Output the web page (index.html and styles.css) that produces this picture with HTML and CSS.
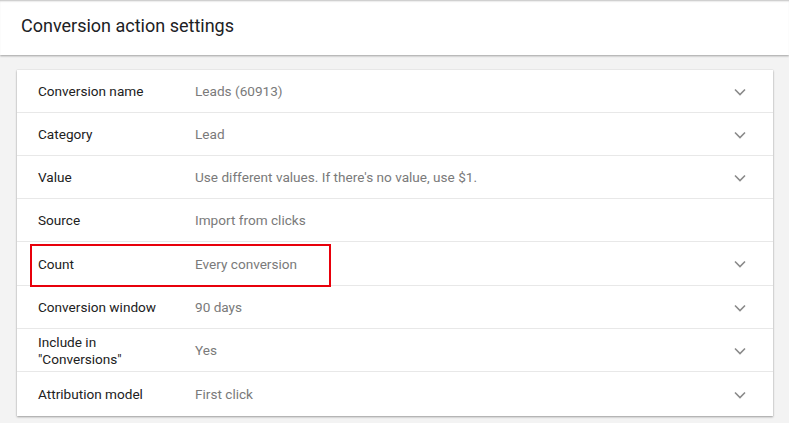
FILE: index.html
```html
<!DOCTYPE html>
<html>
<head>
<meta charset="utf-8">
<link rel="stylesheet" href="styles.css">
</head>
<body>
<header class="header"><h1 class="title">Conversion action settings</h1></header>
<main class="content">
  <section class="card">
    <div class="row"><div class="label">Conversion name</div><div class="value">Leads (60913)</div><svg class="chev" viewBox="0 0 12 8"><path d="M1 1.5l5 5 5-5" /></svg></div>
    <div class="row"><div class="label">Category</div><div class="value">Lead</div><svg class="chev" viewBox="0 0 12 8"><path d="M1 1.5l5 5 5-5" /></svg></div>
    <div class="row"><div class="label">Value</div><div class="value">Use different values. If there's no value, use $1.</div><svg class="chev" viewBox="0 0 12 8"><path d="M1 1.5l5 5 5-5" /></svg></div>
    <div class="row"><div class="label">Source</div><div class="value">Import from clicks</div></div>
    <div class="row tall"><div class="label">Count</div><div class="value">Every conversion</div><svg class="chev" viewBox="0 0 12 8"><path d="M1 1.5l5 5 5-5" /></svg><div class="highlight"></div></div>
    <div class="row"><div class="label">Conversion window</div><div class="value">90 days</div><svg class="chev" viewBox="0 0 12 8"><path d="M1 1.5l5 5 5-5" /></svg></div>
    <div class="row"><div class="label">Include in<br>"Conversions"</div><div class="value">Yes</div><svg class="chev" viewBox="0 0 12 8"><path d="M1 1.5l5 5 5-5" /></svg></div>
    <div class="row last"><div class="label">Attribution model</div><div class="value">First click</div><svg class="chev" viewBox="0 0 12 8"><path d="M1 1.5l5 5 5-5" /></svg></div>
  </section>
</main>
</body>
</html>
```
FILE: styles.css
```css
* { box-sizing: border-box; }
html, body { margin: 0; padding: 0; }
body {
  background: #f3f3f3;
  font-family: Roboto, "Liberation Sans", sans-serif;
  width: 789px;
  height: 423px;
  overflow: hidden;
}
.header {
  background: #fff;
  height: 55px;
  padding: 14px 0 0 21px;
  box-shadow: 0 1px 2px rgba(0,0,0,0.35), inset 0 2px 2px -1px rgba(0,0,0,0.25);
  position: relative;
}
.title {
  margin: 0;
  font-size: 18px;
  font-weight: 400;
  color: #202124;
  line-height: 24px;
}
.content {
  padding: 15px 16px 0 17px;
}
.card {
  background: #fff;
  width: 756px;
  box-shadow: 0 1px 2px rgba(0,0,0,0.35), 0 0 1px rgba(0,0,0,0.15);
}
.row {
  position: relative;
  display: flex;
  align-items: center;
  height: 43px;
  border-bottom: 1px solid #e8e8e8;
  padding-left: 21px;
  padding-top: 1px;
  font-size: 13.6px;
  line-height: 17px;
}
.row.tall { height: 44px; }
.row.last { border-bottom: none; height: 44px; }
.label {
  width: 157px;
  color: #212121;
}
.value {
  flex: 1;
  color: #7a7a7a;
}
.chev {
  width: 12px;
  height: 8px;
  margin-right: 27px;
  fill: none;
  stroke: #8a8a8a;
  stroke-width: 1.6;
}
.highlight {
  position: absolute;
  left: 13px;
  top: 2px;
  width: 301px;
  height: 43px;
  border: 2px solid #e8000b;
  pointer-events: none;
}
```
